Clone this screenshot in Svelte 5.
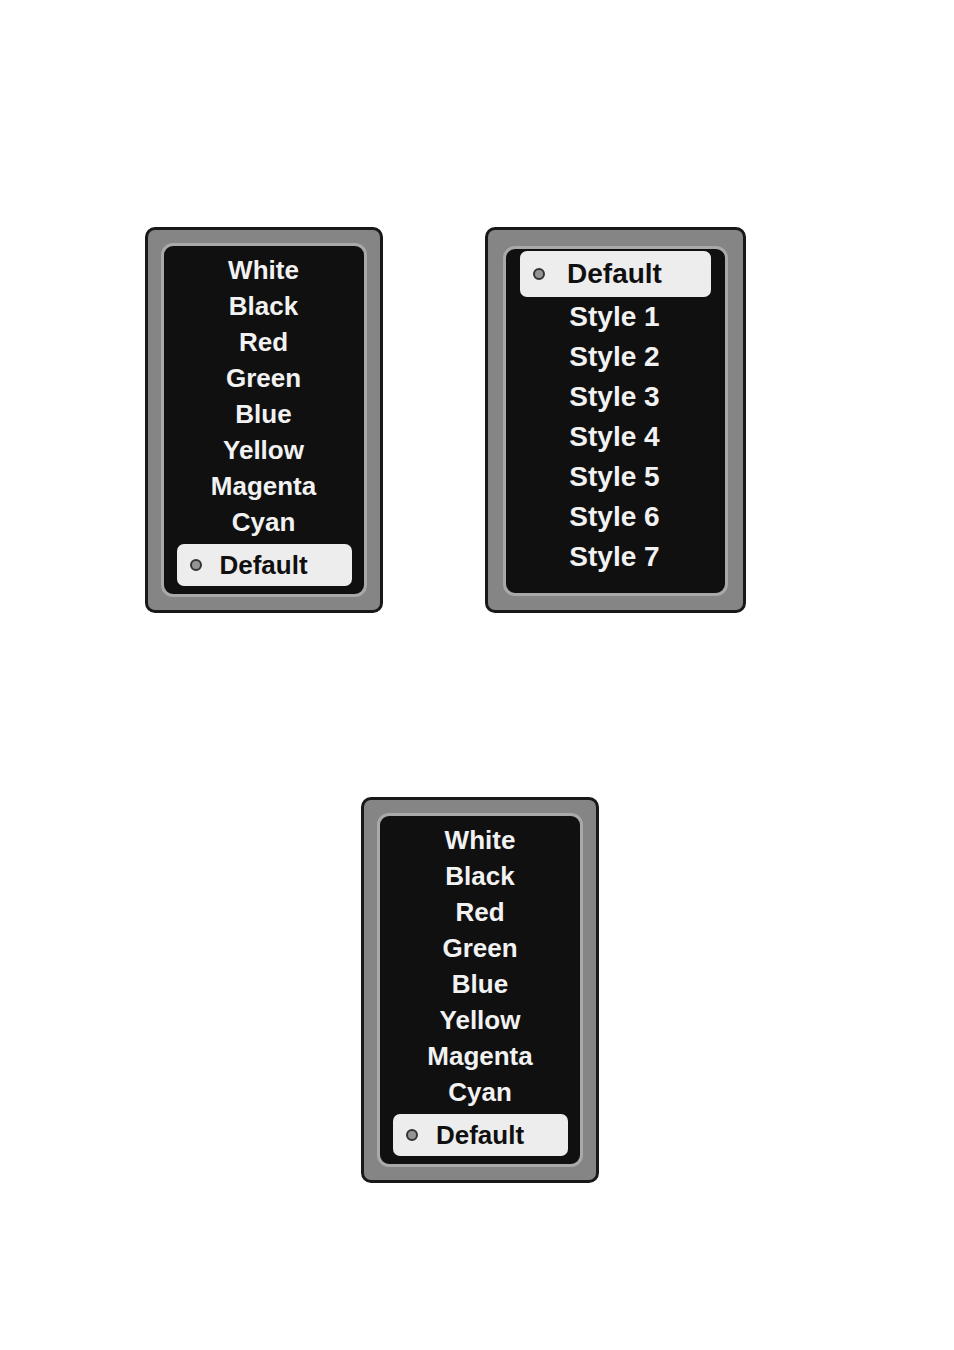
<script lang="ts">
	interface Menu {
		id: string;
		label: string;
		large: boolean;
		options: string[];
	}

	const colors = ['White', 'Black', 'Red', 'Green', 'Blue', 'Yellow', 'Magenta', 'Cyan', 'Default'];
	const styles = ['Default', 'Style 1', 'Style 2', 'Style 3', 'Style 4', 'Style 5', 'Style 6', 'Style 7'];

	const rows: Menu[][] = [
		[
			{ id: 'text-color', label: 'Text color', large: false, options: colors },
			{ id: 'font-style', label: 'Font style', large: true, options: styles }
		],
		[{ id: 'background-color', label: 'Background color', large: false, options: colors }]
	];

	let selected: Record<string, string> = $state({
		'text-color': 'Default',
		'font-style': 'Default',
		'background-color': 'Default'
	});
</script>

<main class="page">
	{#each rows as menus}
		<div class="row" class:pair={menus.length > 1}>
			{#each menus as menu (menu.id)}
				<div class="frame" class:large={menu.large}>
					<div class="screen" role="radiogroup" aria-label={menu.label}>
						{#each menu.options as option}
							<label class="option" class:selected={selected[menu.id] === option}>
								<input type="radio" name={menu.id} value={option} bind:group={selected[menu.id]} />
								<span>{option}</span>
							</label>
						{/each}
					</div>
				</div>
			{/each}
		</div>
	{/each}
</main>

<style>
	:global(body) {
		margin: 0;
		background: #fff;
	}

	.page {
		display: flex;
		flex-direction: column;
		gap: 184px;
		padding: 227px 0 167px;
		font-family: 'Liberation Sans', Arial, sans-serif;
		font-weight: 700;
	}

	.row {
		display: flex;
		justify-content: center;
		gap: 102px;
		padding-left: 6px;
	}

	.row.pair {
		padding: 0 64px 0 0;
	}

	.frame {
		box-sizing: border-box;
		width: 238px;
		padding: 13px;
		border: 3px solid #181818;
		border-radius: 10px;
		background: #858585;
	}

	.frame.large {
		width: 261px;
		padding: 16px 15px 14px;
	}

	.screen {
		display: flex;
		flex-direction: column;
		padding: 6px 12px 8px 13px;
		border: 3px solid #a9a9a9;
		border-radius: 12px;
		background: #101010;
		font-size: 26px;
		line-height: 36px;
	}

	.large .screen {
		padding: 2px 14px 16px;
		font-size: 28px;
		line-height: 40px;
	}

	.option {
		display: grid;
		grid-template-columns: 12px 1fr 14px;
		align-items: center;
		padding: 0 12px 0 13px;
		color: #f2f2f2;
		text-align: center;
		white-space: nowrap;
		cursor: pointer;
	}

	.option.selected {
		border-radius: 7px;
		background: #ededed;
		color: #101010;
		line-height: 42px;
	}

	.option.selected:last-child {
		margin-top: 4px;
	}

	.large .option.selected {
		line-height: 46px;
	}

	input {
		box-sizing: border-box;
		width: 12px;
		height: 12px;
		margin: 0;
		border-radius: 50%;
		appearance: none;
		cursor: pointer;
	}

	input:checked {
		border: 2px solid #333;
		background: #949494;
	}
</style>
